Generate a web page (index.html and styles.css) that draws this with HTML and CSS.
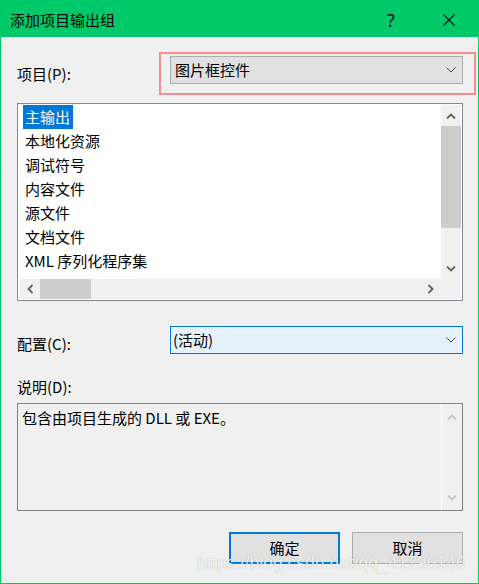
FILE: index.html
```html
<!DOCTYPE html>
<html lang="zh-CN">
<head>
<meta charset="utf-8">
<title>添加项目输出组</title>
<link rel="stylesheet" href="styles.css">
</head>
<body>
<div class="window">
  <div class="titlebar">
    <span class="title">添加项目输出组</span>
    <div class="tb-btn help">?</div>
    <div class="tb-btn close">
      <svg width="12" height="12" viewBox="0 0 12 12"><path d="M0.5 0.5 L11.5 11.5 M11.5 0.5 L0.5 11.5" stroke="#111" stroke-width="1.1" fill="none"/></svg>
    </div>
  </div>
  <div class="content">
    <div class="field-row">
      <span class="field-label">项目(P):</span>
      <div class="combo">
        <span>图片框控件</span>
        <svg class="chev" width="10" height="6" viewBox="0 0 10 6"><polyline points="0.5,0.5 5,5 9.5,0.5" fill="none" stroke="#444" stroke-width="1"/></svg>
      </div>
    </div>

    <div class="listbox">
      <div class="items">
        <div class="item"><span class="sel">主输出</span></div>
        <div class="item"><span>本地化资源</span></div>
        <div class="item"><span>调试符号</span></div>
        <div class="item"><span>内容文件</span></div>
        <div class="item"><span>源文件</span></div>
        <div class="item"><span>文档文件</span></div>
        <div class="item"><span>XML 序列化程序集</span></div>
      </div>
      <div class="vscroll">
        <div class="sb-btn"><svg width="10" height="6" viewBox="0 0 10 6"><polyline points="1,5.5 5,1.5 9,5.5" fill="none" stroke="#606060" stroke-width="1.8"/></svg></div>
        <div class="vthumb"></div>
        <div class="track"></div>
        <div class="sb-btn"><svg width="10" height="6" viewBox="0 0 10 6"><polyline points="1,0.5 5,4.5 9,0.5" fill="none" stroke="#606060" stroke-width="1.8"/></svg></div>
      </div>
      <div class="hscroll">
        <div class="sb-btn"><svg width="6" height="10" viewBox="0 0 6 10"><polyline points="5.5,1 1.5,5 5.5,9" fill="none" stroke="#606060" stroke-width="1.8"/></svg></div>
        <div class="hthumb"></div>
        <div class="track"></div>
        <div class="sb-btn"><svg width="6" height="10" viewBox="0 0 6 10"><polyline points="0.5,1 4.5,5 0.5,9" fill="none" stroke="#606060" stroke-width="1.8"/></svg></div>
      </div>
      <div class="corner"></div>
    </div>

    <div class="field-row config-row">
      <span class="field-label">配置(C):</span>
      <div class="combo active">
        <span>(活动)</span>
        <svg class="chev" width="10" height="6" viewBox="0 0 10 6"><polyline points="0.5,0.5 5,5 9.5,0.5" fill="none" stroke="#444" stroke-width="1"/></svg>
      </div>
    </div>

    <div class="desc-label">说明(D):</div>
    <div class="desc">
      <div class="desc-text">包含由项目生成的 DLL 或 EXE。</div>
      <div class="desc-sb">
        <div class="sb-btn"><svg width="10" height="6" viewBox="0 0 10 6"><polyline points="1,5.5 5,1.5 9,5.5" fill="none" stroke="#c4c4c4" stroke-width="1.8"/></svg></div>
        <div class="sb-btn"><svg width="10" height="6" viewBox="0 0 10 6"><polyline points="1,0.5 5,4.5 9,0.5" fill="none" stroke="#c4c4c4" stroke-width="1.8"/></svg></div>
      </div>
    </div>

    <div class="buttons">
      <button class="btn primary">确定</button>
      <button class="btn">取消</button>
    </div>
  </div>

  <div class="annot"></div>
  <div class="watermark">https://blog.csdn.net/qq_41796146</div>
</div>
</body>
</html>
```
FILE: styles.css
```css
* { box-sizing: border-box; }
html, body { margin: 0; padding: 0; background: #ffffff; }
body {
  font-family: "Noto Sans CJK SC", "Noto Sans", sans-serif;
  font-size: 15px;
  color: #000;
}
.window {
  position: relative;
  width: 479px;
  height: 584px;
  border: 1px solid #00c96a;
  background: #f0f0f0;
  display: flex;
  flex-direction: column;
  overflow: hidden;
}
.titlebar {
  flex: none;
  height: 36px;
  background: #00c96a;
  display: flex;
  align-items: center;
}
.title {
  flex: 1;
  padding-left: 9px;
  padding-top: 1px;
  line-height: 20px;
}
.tb-btn {
  width: 58px;
  height: 36px;
  display: flex;
  align-items: center;
  justify-content: center;
}
.help {
  font-family: "Noto Sans", sans-serif;
  font-size: 18px;
  line-height: 20px;
  padding-top: 2px;
  color: #111;
}
.close { padding-top: 2px; }

.content {
  padding: 19px 15px 0 16px;
  display: flex;
  flex-direction: column;
}
.field-row {
  display: flex;
  align-items: center;
  height: 28px;
}
.field-label {
  flex: none;
  width: 153px;
  margin-top: 8px;
  line-height: 20px;
}
.combo {
  flex: 1;
  height: 28px;
  border: 1px solid #adadad;
  background: #e1e1e1;
  display: flex;
  align-items: center;
  justify-content: space-between;
  padding: 0 6px 0 4px;
  line-height: 20px;
}
.combo.active {
  border-color: #0078d7;
  background: #e5f1fb;
  padding-left: 2px;
}
.chev { flex: none; }

.listbox {
  margin-top: 19px;
  height: 198px;
  border: 1px solid #828790;
  padding: 1px;
  background: #fff;
  display: grid;
  grid-template-columns: 1fr 20px;
  grid-template-rows: 1fr 20px;
}
.items { overflow: hidden; }
.item { height: 24px; line-height: 24px; padding-left: 4px; }
.item span { display: inline-block; height: 24px; padding: 0 2px; }
.item .sel { background: #0078d7; color: #fff; padding: 0 3px 0 2px; }

.vscroll {
  background: #f0f0f0;
  display: flex;
  flex-direction: column;
}
.hscroll {
  background: #f0f0f0;
  display: flex;
}
.sb-btn {
  flex: none;
  width: 21px;
  height: 21px;
  display: flex;
  align-items: center;
  justify-content: center;
}
.vscroll .sb-btn { width: 20px; }
.hscroll .sb-btn { height: 20px; }
.vthumb { flex: none; height: 102px; background: #cdcdcd; }
.hthumb { flex: none; width: 51px; background: #cdcdcd; }
.track { flex: 1; }
.corner { background: #f0f0f0; }

.config-row { margin-top: 25px; }

.desc-label {
  margin-top: 23px;
  line-height: 20px;
}
.desc {
  margin-top: 6px;
  height: 108px;
  border: 1px solid #828282;
  background: #f0f0f0;
  display: flex;
}
.desc-text {
  flex: 1;
  padding: 3px 4px;
  line-height: 22px;
}
.desc-sb {
  flex: none;
  width: 21px;
  border-left: 1px solid #ffffff;
  display: flex;
  flex-direction: column;
  justify-content: space-between;
  padding: 2px 0;
}
.desc-sb .sb-btn { width: 20px; }

.buttons {
  margin-top: 21px;
  display: flex;
  justify-content: flex-end;
  gap: 12px;
}
.btn {
  width: 111px;
  height: 32px;
  border: 1px solid #adadad;
  background: #e1e1e1;
  font-family: "Noto Sans CJK SC", sans-serif;
  font-size: 15px;
  color: #000;
  padding: 0;
  line-height: 20px;
}
.btn.primary { border: 2px solid #0078d7; }

.annot {
  position: absolute;
  left: 158px;
  top: 51px;
  width: 317px;
  height: 43px;
  border: 2px solid #f29090;
}
.watermark {
  position: absolute;
  left: 196px;
  top: 552px;
  font-family: "Liberation Sans", sans-serif;
  font-size: 17.5px;
  color: rgba(255, 255, 255, 0.85);
  text-shadow: 0 0 1px rgba(0, 0, 0, 0.3);
  white-space: nowrap;
}
```
